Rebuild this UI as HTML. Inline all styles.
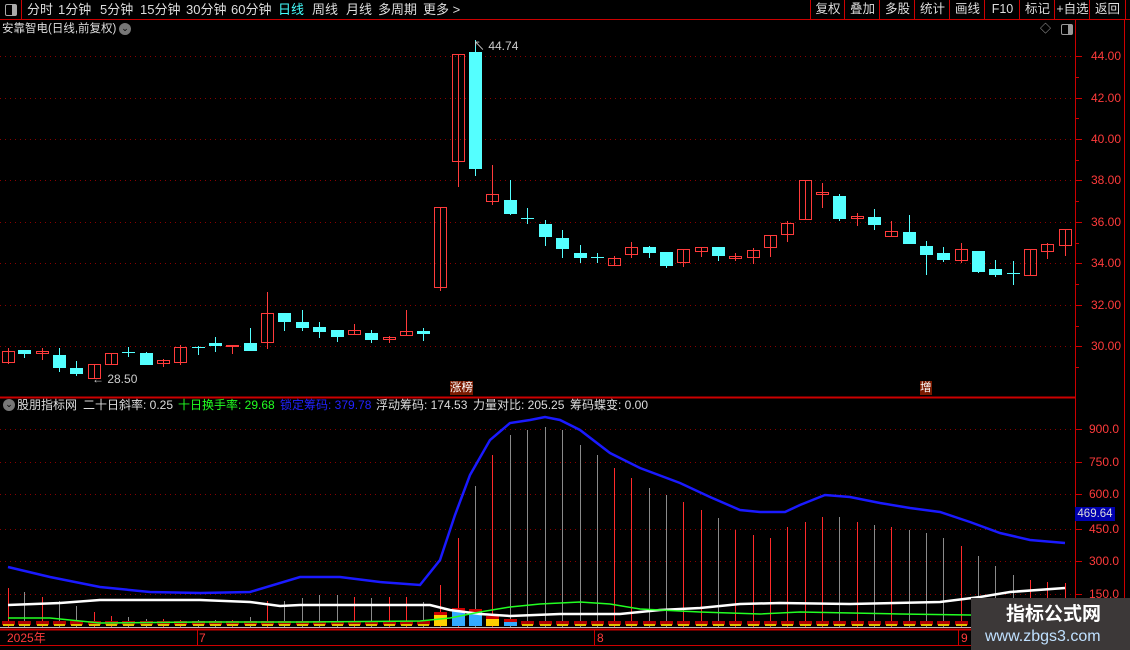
<!DOCTYPE html>
<html><head><meta charset="utf-8"><style>
body{margin:0;background:#000;width:1130px;height:650px;overflow:hidden;position:relative;font-family:"Liberation Sans","Noto Sans CJK SC",sans-serif;}
.t{position:absolute;white-space:nowrap;font-size:12px;line-height:14px;}
#top span{position:absolute;top:2px;font-size:13px;line-height:15px;color:#ddd;}
.btn{position:absolute;top:0;height:19px;border-left:1px solid #c00;color:#ddd;font-size:12.5px;line-height:19px;text-align:center;}
.ax{position:absolute;left:1091px;color:#ff3b3b;font-size:12px;line-height:12px;}
</style></head><body>
<svg id="s" width="1130" height="650" style="position:absolute;left:0;top:0"></svg>

<div id="top">
<div style="position:absolute;left:0;top:0;width:21px;height:19px;border-right:1px solid #c00;"></div>
<div style="position:absolute;left:5px;top:4px;width:10px;height:10px;border:1px solid #aaa;border-radius:2px;"><div style="position:absolute;right:0;top:0;width:4px;height:10px;background:#aaa"></div></div>
<span style="left:27px">分时</span><span style="left:58px">1分钟</span><span style="left:100px">5分钟</span><span style="left:140px">15分钟</span><span style="left:186px">30分钟</span><span style="left:231px">60分钟</span><span style="left:278px;color:#4ff">日线</span><span style="left:312px">周线</span><span style="left:346px">月线</span><span style="left:378px">多周期</span><span style="left:423px">更多 &gt;</span>
</div>
<div class="btn" style="left:810px;width:34px">复权</div><div class="btn" style="left:844px;width:35px">叠加</div><div class="btn" style="left:879px;width:35px">多股</div><div class="btn" style="left:914px;width:35px">统计</div><div class="btn" style="left:949px;width:35px">画线</div><div class="btn" style="left:984px;width:35px">F10</div><div class="btn" style="left:1019px;width:35px">标记</div><div class="btn" style="left:1054px;width:35px">+自选</div><div class="btn" style="left:1089px;width:35px;border-right:1px solid #c00">返回</div>

<div class="t" style="left:2px;top:22px;color:#ddd;font-size:11.5px">安靠智电(日线,前复权)</div>
<div style="position:absolute;left:119px;top:23px;width:12px;height:12px;border-radius:50%;background:#777;color:#000;font-size:9px;line-height:11px;text-align:center">⌄</div>
<div class="t" style="left:1040px;top:22px;color:#aaa;font-size:11px">◇</div>
<div style="position:absolute;left:1061px;top:24px;width:10px;height:9px;border:1px solid #999;border-radius:2px;"><div style="position:absolute;right:0;top:0;width:4px;height:9px;background:#999"></div></div>

<div class="ax" style="top:50px">44.00</div><div class="ax" style="top:92px">42.00</div><div class="ax" style="top:133px">40.00</div><div class="ax" style="top:174px">38.00</div><div class="ax" style="top:216px">36.00</div><div class="ax" style="top:257px">34.00</div><div class="ax" style="top:299px">32.00</div><div class="ax" style="top:340px">30.00</div>
<div class="ax" style="top:423px;left:1089px">900.0</div><div class="ax" style="top:456px;left:1089px">750.0</div><div class="ax" style="top:488px;left:1089px">600.0</div><div class="ax" style="top:523px;left:1089px">450.0</div><div class="ax" style="top:555px;left:1089px">300.0</div><div class="ax" style="top:588px;left:1089px">150.0</div>
<div class="t" style="left:1075px;top:507px;width:40px;height:14px;background:#0000b0;color:#ddd;font-size:11.5px;text-align:center">469.64</div>

<div class="t" style="left:473px;top:39px;color:#ccc">↖ 44.74</div>
<div class="t" style="left:92px;top:372px;color:#ccc">← 28.50</div>
<div class="t" style="left:450px;top:381px;background:#7a1a00;color:#fff;font-size:11.5px">涨榜</div>
<div class="t" style="left:920px;top:381px;background:#7a1a00;color:#fff;font-size:11.5px">增</div>

<div style="position:absolute;left:3px;top:399px;width:12px;height:12px;border-radius:50%;background:#777;color:#000;font-size:9px;line-height:11px;text-align:center">⌄</div>
<div class="t" style="left:17px;top:398px;color:#ddd">股朋指标网</div>
<div class="t" style="left:83px;top:398px;color:#ddd">二十日斜率: 0.25</div>
<div class="t" style="left:178px;top:398px;color:#2f2">十日换手率: 29.68</div>
<div class="t" style="left:280px;top:398px;color:#22f">锁定筹码: 379.78</div>
<div class="t" style="left:376px;top:398px;color:#ddd">浮动筹码: 174.53</div>
<div class="t" style="left:473px;top:398px;color:#ddd">力量对比: 205.25</div>
<div class="t" style="left:570px;top:398px;color:#ddd">筹码蝶变: 0.00</div>

<div class="t" style="left:7px;top:631px;color:#ff3b3b">2025年</div>
<div class="t" style="left:199px;top:631px;color:#ff3b3b">7</div>
<div class="t" style="left:597px;top:631px;color:#ff3b3b">8</div>
<div class="t" style="left:961px;top:631px;color:#ff3b3b">9</div>

<div style="position:absolute;left:971px;top:598px;width:159px;height:52px;background:#3c3838;"></div>
<div class="t" style="left:1006px;top:604px;color:#fff;font-size:19px;line-height:22px;font-weight:bold">指标公式网</div>
<div class="t" style="left:985px;top:628px;color:#bfe0ff;font-size:16px;line-height:18px">www.zbgs3.com</div>

<script>
var s=document.getElementById('s'),h='';
function L(x1,y1,x2,y2,c,w,d){h+='<line x1="'+x1+'" y1="'+y1+'" x2="'+x2+'" y2="'+y2+'" stroke="'+c+'" stroke-width="'+(w||1)+'"'+(d?' stroke-dasharray="'+d+'"':'')+'/>';}
function R(x,y,w,hh,f,st){h+='<rect x="'+x+'" y="'+y+'" width="'+w+'" height="'+hh+'" fill="'+f+'"'+(st?' stroke="'+st+'"':'')+'/>';}
L(0,19.5,1130,19.5,'#c00');L(1075.5,20,1075.5,629,'#c00');L(1124.5,20,1124.5,650,'#c00');
L(0,397.5,1075,397.5,'#c00',2);L(0,629.5,1125,629.5,'#c00',2);L(0,645.5,1125,645.5,'#c00');
[197,594,958].forEach(function(x){L(x+.5,630,x+.5,645,'#c00');});
[56,98,139,180,222,263,305,346].forEach(function(y){L(0,y+.5,1075,y+.5,'#8a0000',1,'1 4');L(1075,y+.5,1082,y+.5,'#c00');});
[77,118,160,201,243,284,326,367].forEach(function(y){L(1075,y+.5,1079,y+.5,'#c00');});
[429,462,494,529,561,594].forEach(function(y){L(0,y+.5,1075,y+.5,'#8a0000',1,'1 4');L(1075,y+.5,1082,y+.5,'#c00');});
var C=[[8,351,362,348,363,'r'],[24,350,353,350,357,'c'],[42,351,353,348,359,'r'],[59,355,367,348,371,'c'],[76,368,373,361,375,'c'],[94,364,378,364,378,'r'],[111,353,364,353,364,'r'],[128,352,353,347,356,'c'],[146,353,364,352,364,'c'],[163,360,363,359,366,'r'],[180,347,362,345,364,'r'],[198,347,348,346,354,'c'],[215,343,345,337,351,'c'],[232,345,346,345,353,'r'],[250,343,350,328,350,'c'],[267,313,342,292,348,'r'],[284,313,321,313,330,'c'],[302,322,327,310,330,'c'],[319,327,331,322,337,'c'],[337,330,336,330,341,'c'],[354,330,334,324,334,'r'],[371,333,339,330,342,'c'],[389,337,339,336,342,'r'],[406,331,335,310,335,'r'],[423,331,333,328,340,'c'],[440,207,287,207,290,'r'],[458,54,161,54,186,'r'],[475,52,168,40,175,'c'],
[492,194,201,165,204,'r'],[510,200,213,180,214,'c'],[527,218,219,208,223,'c'],[545,224,236,220,245,'c'],[562,238,248,230,257,'c'],[580,253,257,245,262,'c'],[597,257,258,253,262,'c'],[614,258,265,256,265,'r'],[631,247,254,242,257,'r'],[649,247,252,246,257,'c'],[666,252,265,252,267,'c'],[683,249,262,249,266,'r'],[701,247,251,247,256,'r'],[718,247,255,247,260,'c'],[735,256,258,253,260,'r'],[753,250,257,248,263,'r'],[770,235,247,235,256,'r'],[787,223,234,221,241,'r'],[805,180,219,180,219,'r'],[822,192,194,183,207,'r'],[839,196,218,194,220,'c'],[857,216,218,213,225,'r'],[874,217,224,209,229,'c'],[891,231,236,221,236,'r'],[909,232,243,215,243,'c'],[926,246,254,241,274,'c'],[943,253,259,247,261,'c'],[961,249,260,243,262,'r'],[978,251,271,251,272,'c'],[995,269,274,260,276,'c'],[1013,273,274,261,284,'c'],[1030,249,275,249,275,'r'],[1047,244,251,243,258,'r'],[1065,229,245,229,255,'r']];
var V=[588,592,597,601,606,612,616,617,619,619,620,620,620,620,617,601,601,598,595,595,597,598,597,597,602,585,538,486,455,435,430,427,430,445,455,468,478,488,495,502,510,518,530,535,538,527,522,517,517,522,525,527,530,533,538,546,556,566,575,580,582,583];
C.forEach(function(c,i){var x=c[0],col=c[5]=='r'?'#ff3b3b':'#54ffff';
 L(x+.5,c[3],x+.5,c[4]+1,col);
 var bh=Math.max(1,c[2]-c[1]);
 if(c[5]=='r')R(x-5.5,c[1]+.5,12,bh,'none',col);else R(x-6,c[1],13,bh+(bh<2?0:1),col);
 L(x+.5,V[i],x+.5,627,c[5]=='r'?'#ff2a2a':'#8a8a8a');
 R(x-6,621,13,4,'#b00000');R(x-5,624,11,2,'#e0c000');
});
[[440,612,'#ffd000'],[458,608,'#3af'],[475,609,'#3af'],[492,616,'#ffd000'],[510,619,'#3af']].forEach(function(b){R(b[0]-6,b[1],13,626-b[1],b[2]);R(b[0]-6,b[1],13,3,'#c00');});
L(0,627.5,1075,627.5,'#bbb');
function P(pts,c,w){h+='<polyline fill="none" stroke="'+c+'" stroke-width="'+w+'" points="'+pts+'"/>';}
P('8,567 50,577 100,587 150,592 200,593 250,592 300,577 340,577 380,582 420,585 440,560 455,515 470,475 490,440 510,423 530,420 545,417 560,420 580,430 610,453 640,468 680,483 710,497 740,510 760,512 785,512 800,505 825,495 850,497 880,503 910,508 940,512 970,522 1000,533 1030,540 1065,543','#1a1aff',2.5);
P('8,605 60,603 100,600 200,600 250,602 280,606 300,605 430,605 450,610 480,614 510,616 560,614 620,614 660,610 700,608 740,604 780,603 850,604 940,602 980,597 1010,592 1065,588','#fff',2.5);
P('8,618 50,618 70,620 100,623 200,622 300,622 420,621 450,618 480,612 510,607 540,604 580,602 610,604 640,609 700,612 760,614 800,612 900,614 970,615 1065,617','#2f2',1.5);
s.innerHTML=h;
</script>
</body></html>
